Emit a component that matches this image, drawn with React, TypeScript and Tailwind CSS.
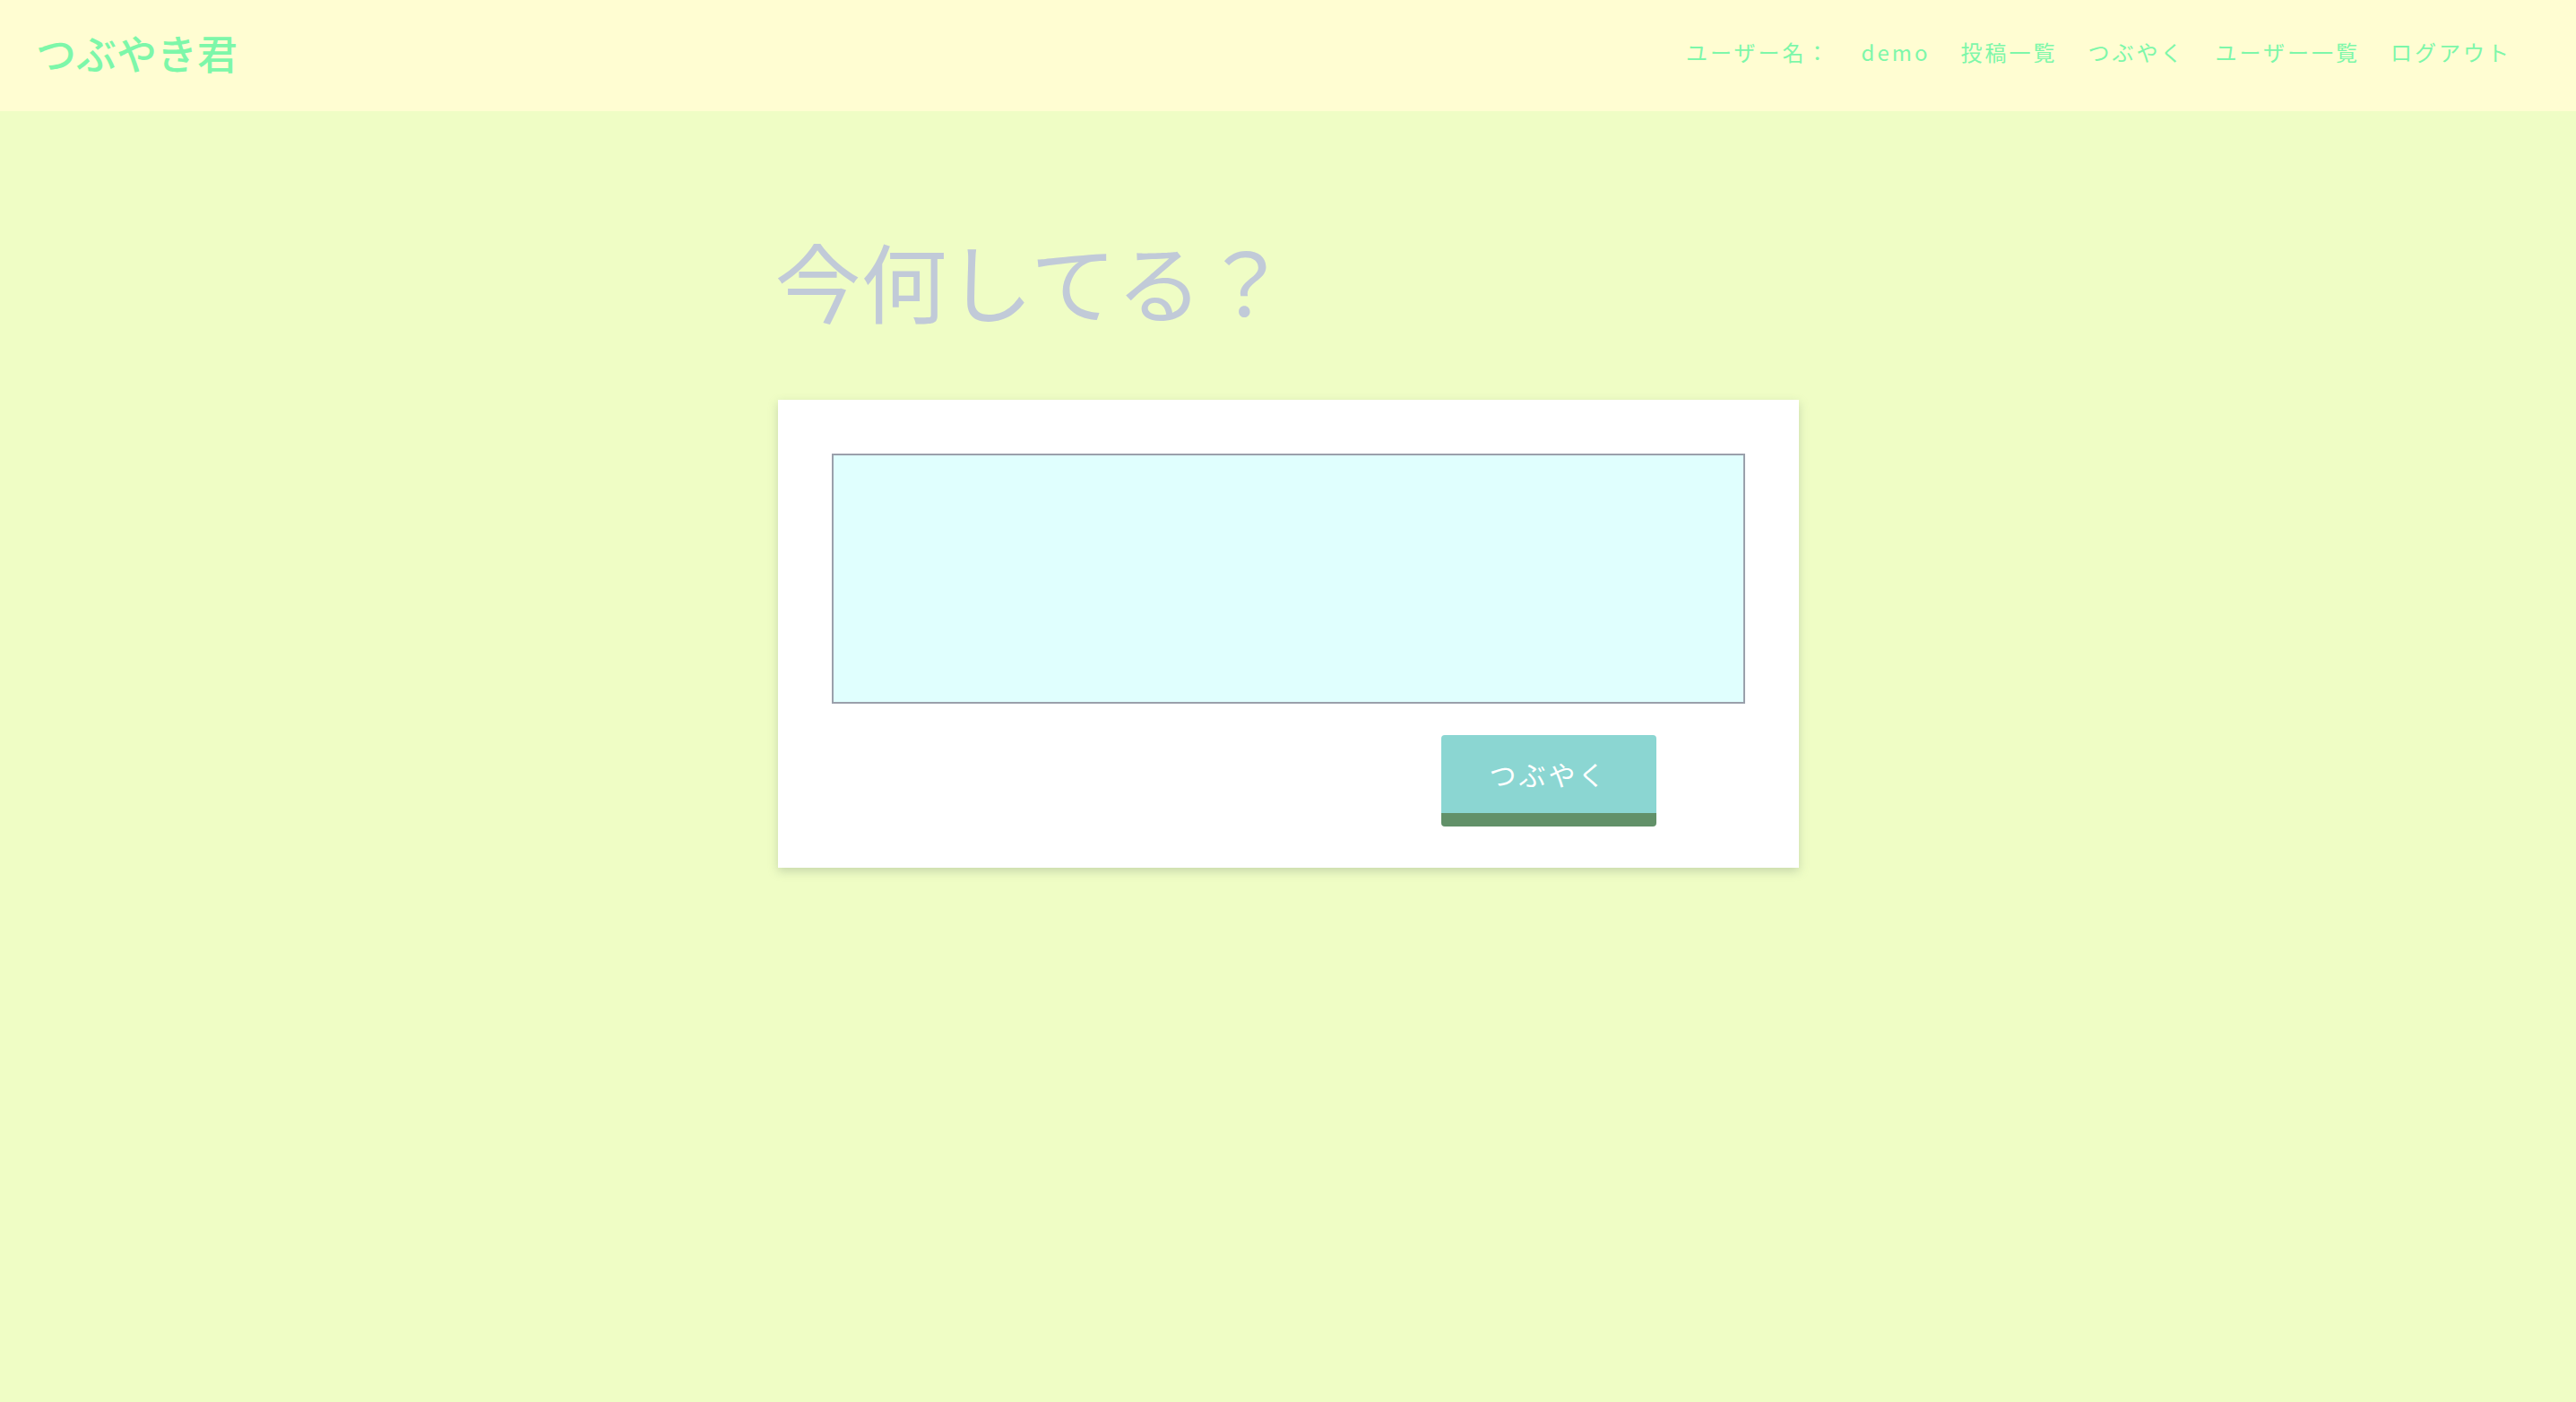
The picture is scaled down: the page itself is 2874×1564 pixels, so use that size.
const navItems = ["demo", "投稿一覧", "つぶやく", "ユーザー一覧", "ログアウト"];

export default function App() {
  return (
    <div
      className="min-h-screen bg-[#effdc5]"
      style={{ fontFamily: '"Noto Sans CJK JP", "Noto Sans", sans-serif' }}
    >
      <header className="h-[124px] bg-[#fffdd2] flex items-center justify-between pl-[40px] pr-[72px] pb-[8px]">
        <h1 className="text-[45px] leading-none text-[#7df7a9] font-medium">
          つぶやき君
        </h1>
        <nav className="flex items-center gap-[34px] text-[24px] tracking-[3px] text-[#7df7a9]">
          <span>ユーザー名：</span>
          {navItems.map((item) => (
            <a key={item} href="#" className="block">
              {item}
            </a>
          ))}
        </nav>
      </header>

      <main className="w-[1139px] mx-auto pt-[140px]">
        <h2 className="text-[96px] leading-none text-[#c1cad8] -ml-[3px]">
          今何してる？
        </h2>

        <div className="mt-[86px] bg-white shadow-[0_4px_10px_rgba(150,170,140,0.45)] p-[60px] pb-[46px]">
          <textarea className="block w-full h-[279px] bg-[#e0fffe] border-2 border-[#9aa0ab] resize-none outline-none" />
          <div className="flex justify-end pr-[99px] mt-[35px]">
            <button
              type="button"
              className="w-[240px] h-[102px] bg-[#8bd6d2] border-b-[15px] border-[#629169] rounded-[4px] text-white text-[30px] tracking-[3px]"
            >
              つぶやく
            </button>
          </div>
        </div>
      </main>
    </div>
  );
}
